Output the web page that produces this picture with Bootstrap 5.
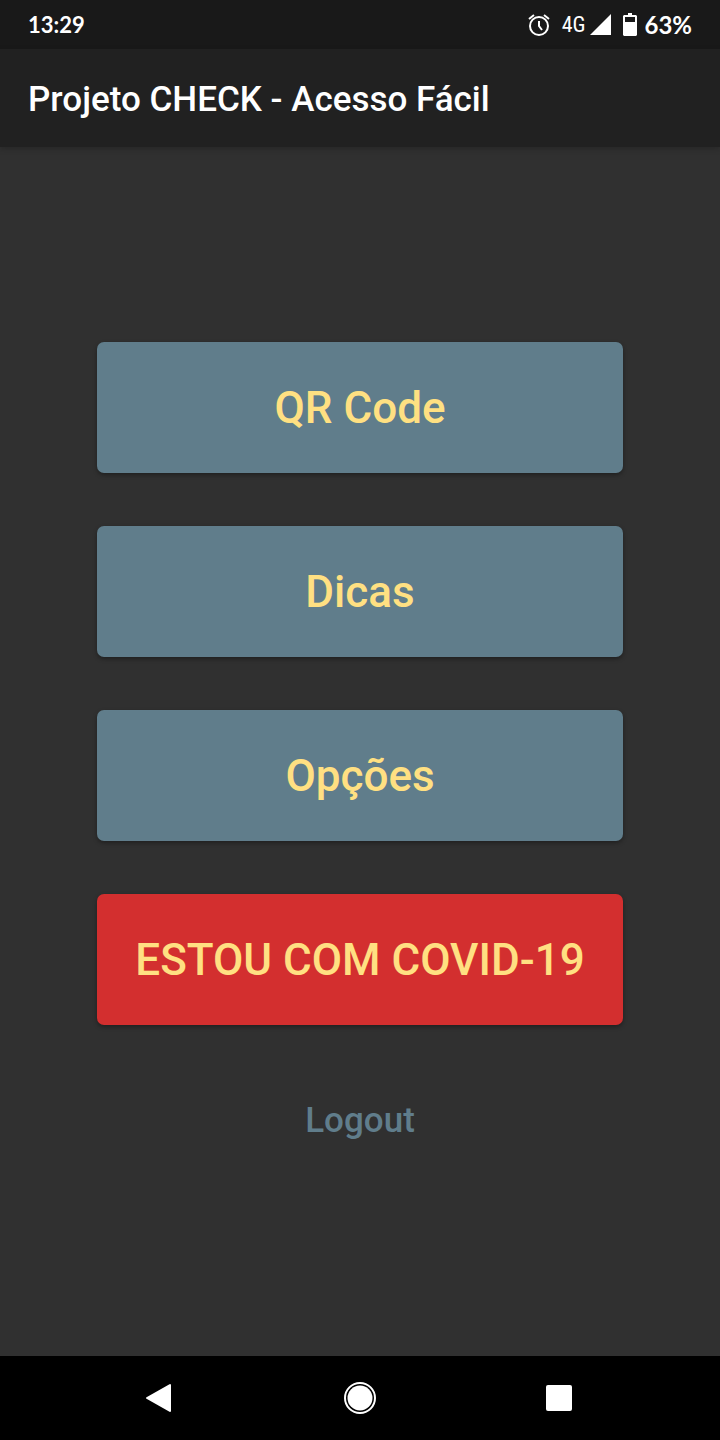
<!DOCTYPE html>
<html lang="pt-BR">
<head>
<meta charset="utf-8">
<meta name="viewport" content="width=device-width, initial-scale=1">
<title>Projeto CHECK - Acesso Fácil</title>
<link rel="stylesheet" href="https://cdn.jsdelivr.net/npm/bootstrap@5.3.0/dist/css/bootstrap.min.css">
<style>
body { font-family: Roboto, sans-serif; background: #303030; color: #fff; }
.status-bar { height: 49px; padding: 0 28px; background: #191919; font-family: Lato, Roboto, sans-serif; font-size: 24px; font-weight: 700; line-height: 28px; }
.clock { font-size: 22px; }
.network { margin: 0 5px 0 12px; font-family: "Roboto Condensed", "Liberation Sans Narrow", Roboto, sans-serif; font-size: 22px; font-weight: 400; }
.battery { margin: 0 7px 0 12px; }
.app-bar { height: 98px; padding: 3px 28px 0; background: #212121; box-shadow: 0 2px 6px rgba(0,0,0,.2); }
.app-bar h1 { font-size: 35px; font-weight: 500; line-height: 42px; }
.menu { width: 73%; gap: 53px; }
.menu .btn { padding: 8px 12px 6px; font-weight: 500; }
.menu-btn { --bs-btn-color: #ffe082; --bs-btn-bg: #607d8b; --bs-btn-hover-color: #ffe082; --bs-btn-hover-bg: #546e7a; --bs-btn-border-width: 0; --bs-btn-border-radius: 7px; height: 131px; font-size: 44px; line-height: 52px; box-shadow: 0 2px 4px rgba(0,0,0,.35); }
.menu-alert { --bs-btn-bg: #d32f2f; --bs-btn-hover-bg: #b71c1c; }
.logout { --bs-btn-color: #607d8b; --bs-btn-hover-color: #78909c; height: 84px; font-size: 35px; line-height: 42px; }
.system-nav { height: 84px; padding: 0 60px; background: #000; }
</style>
</head>
<body class="min-vh-100 d-flex flex-column">
<div class="status-bar d-flex align-items-center">
  <span class="clock me-auto">13:29</span>
  <svg width="22" height="24" viewBox="1 0 22 24" fill="none" stroke="#fff" stroke-width="2" aria-hidden="true"><circle cx="12" cy="13" r="9"/><path d="M12 8v5l3 4M2 6l5-4M22 6l-5-4"/></svg>
  <span class="network">4G</span>
  <svg width="21" height="21" viewBox="0 0 21 21" fill="#fff" aria-hidden="true"><path d="M0 21 21 0v21z"/></svg>
  <svg class="battery" width="14" height="23" viewBox="0 0 14 23" fill="#fff" aria-hidden="true"><path fill-rule="evenodd" d="M5 0h4v2h4l1 1v19l-1 1H1l-1-1V3l1-1h4zM2 4v5h10V4z"/></svg>
  <span>63%</span>
</div>
<header class="app-bar d-flex align-items-center"><h1 class="m-0">Projeto CHECK - Acesso Fácil</h1></header>
<main class="flex-grow-1 d-flex flex-column align-items-center justify-content-center">
  <div class="menu d-flex flex-column">
    <button type="button" class="btn menu-btn">QR Code</button>
    <button type="button" class="btn menu-btn">Dicas</button>
    <button type="button" class="btn menu-btn">Opções</button>
    <button type="button" class="btn menu-btn menu-alert">ESTOU COM COVID-19</button>
    <button type="button" class="btn logout">Logout</button>
  </div>
</main>
<nav class="system-nav d-flex align-items-center justify-content-around" aria-label="Sistema">
  <button type="button" class="btn d-flex p-0 border-0" aria-label="Voltar"><svg width="32" height="32" viewBox="0 0 32 32" fill="#fff" stroke="#fff" stroke-width="2" stroke-linejoin="round"><path d="M3 16 26 3v26z"/></svg></button>
  <button type="button" class="btn d-flex p-0 border-0" aria-label="Início"><svg width="32" height="32" viewBox="0 0 32 32" fill="#fff"><circle cx="16" cy="16" r="15" fill="none" stroke="#fff" stroke-width="2"/><circle cx="16" cy="16" r="12.5"/></svg></button>
  <button type="button" class="btn d-flex p-0 border-0" aria-label="Recentes"><svg width="32" height="32" viewBox="0 0 32 32" fill="#fff"><rect x="2" y="3" width="26" height="26" rx="2"/></svg></button>
</nav>
<script src="https://cdn.jsdelivr.net/npm/bootstrap@5.3.0/dist/js/bootstrap.bundle.min.js"></script>
</body>
</html>
